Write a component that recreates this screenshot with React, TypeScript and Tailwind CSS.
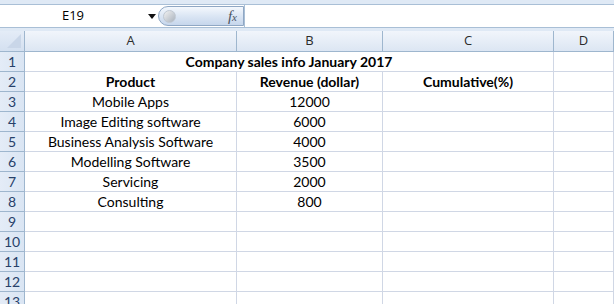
const rows: [string, string, string][] = [
  ["Product", "Revenue (dollar)", "Cumulative(%)"],
  ["Mobile Apps", "12000", ""],
  ["Image Editing software", "6000", ""],
  ["Business Analysis Software", "4000", ""],
  ["Modelling Software", "3500", ""],
  ["Servicing", "2000", ""],
  ["Consulting", "800", ""],
  ["", "", ""],
  ["", "", ""],
  ["", "", ""],
  ["", "", ""],
  ["", "", ""],
];

const cell = "h-5 border-r border-b border-[#d0d7e5] flex items-center justify-center pt-[1px] text-[14px] leading-none text-black";
const rowHead =
  "h-5 border-r border-b border-[#9eb6ce] bg-gradient-to-r from-[#e4ecf7] to-[#dae5f3] flex items-center justify-center pt-[1px] text-[14px] text-[#27416a] leading-none";

export default function App() {
  return (
    <div className="w-[614px] h-[304px] overflow-hidden bg-white font-['Lato','Open_Sans',sans-serif]">
      {/* formula bar */}
      <div className="h-[5px] bg-[#dfe9f5] border-b border-[#a9bfd6]" />
      <div className="h-[22px] flex items-stretch bg-white">
        <div className="w-[146px] flex items-center justify-center text-[13px] text-black font-['Open_Sans',sans-serif]">
          E19
        </div>
        <div className="w-[12px] flex items-center justify-center">
          <svg width="8" height="5" viewBox="0 0 8 5">
            <path d="M0 0h8L4 5z" fill="#111" />
          </svg>
        </div>
        <div className="w-[86px] my-[1px] rounded-l-full border border-[#8fa7c4] bg-gradient-to-b from-[#f4f8fd] via-[#dbe6f4] to-[#c6d6ec] flex items-center justify-between pl-[4px] pr-[6px]">
          <div className="w-[13px] h-[13px] rounded-full bg-gradient-to-br from-[#f2f2f2] to-[#a9b2bd] border border-[#c0c8d2]" />
          <span className="italic text-[15px] text-[#4a5462] font-['Liberation_Serif',serif]">
            f<span className="text-[11px]">x</span>
          </span>
        </div>
        <div className="flex-1 border-l border-[#a9bfd6] bg-white" />
      </div>
      <div className="h-[4px] bg-[#dfe9f5] border-t border-[#a9bfd6]" />

      {/* grid */}
      <div className="grid grid-cols-[25px_212px_146px_171px_1fr]">
        <div className="h-[21px] border-r border-b border-[#9eb6ce] bg-gradient-to-b from-[#e4ecf7] to-[#d4e0f0] flex items-end justify-end p-[3px]">
          <svg width="14" height="14" viewBox="0 0 14 14">
            <path d="M14 0v14H0z" fill="#c9d6e8" />
          </svg>
        </div>
        {["A", "B", "C", "D"].map((c) => (
          <div
            key={c}
            className="h-[21px] border-r border-b border-[#9eb6ce] bg-gradient-to-b from-[#f1f5fb] to-[#dce6f3] flex items-center justify-center text-[13px] text-[#2b2b2b] font-['Open_Sans',sans-serif]"
          >
            {c}
          </div>
        ))}

        <div className={rowHead}>1</div>
        <div className={`${cell} col-span-3 font-bold`}>Company sales info January 2017</div>
        <div className={cell} />

        {rows.map((r, i) => (
          <div key={i} className="contents">
            <div className={rowHead}>{i + 2}</div>
            <div className={`${cell} ${i === 0 ? "font-bold" : ""}`}>{r[0]}</div>
            <div className={`${cell} ${i === 0 ? "font-bold" : ""}`}>{r[1]}</div>
            <div className={`${cell} ${i === 0 ? "font-bold" : ""}`}>{r[2]}</div>
            <div className={cell} />
          </div>
        ))}
      </div>
    </div>
  );
}
